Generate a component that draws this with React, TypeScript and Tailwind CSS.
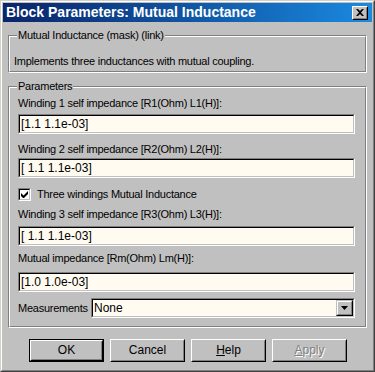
import React from 'react';

const font = { fontFamily: '"Liberation Sans", Arial, sans-serif' };

function Field({ value }: { value: string }) {
  return (
    <div className="border border-t-[#808080] border-l-[#808080] border-b-white border-r-white w-[337px]">
      <div className="flex items-center bg-[#fffbf0] border border-t-black border-l-black border-b-[#c0c0c0] border-r-[#c0c0c0] h-[18px] px-px text-[12px] text-black tracking-normal">
        {value}
      </div>
    </div>
  );
}

function Button({ children, primary, disabled }: { children: React.ReactNode; primary?: boolean; disabled?: boolean }) {
  const inner = (
    <div className="border border-t-white border-l-white border-b-black border-r-black h-full">
      <div className="flex justify-center items-center border border-t-[#c0c0c0] border-l-[#c0c0c0] border-b-[#808080] border-r-[#808080] h-full text-[12px]">
        {children}
      </div>
    </div>
  );
  if (primary) {
    return <div className="border border-black w-[75px] h-[23px]">{inner}</div>;
  }
  return <div className={`w-[75px] h-[23px] ${disabled ? 'text-[#808080]' : 'text-black'}`}>{inner}</div>;
}

function Group({ title, children, className }: { title: string; children: React.ReactNode; className?: string }) {
  return (
    <div className={`relative border border-t-[#808080] border-l-[#808080] border-b-white border-r-white ${className ?? ''}`}>
      <div className="border border-t-white border-l-white border-b-[#808080] border-r-[#808080] h-full">
        {children}
      </div>
      <span className="top-[-7px] left-[8px] absolute bg-[#c0c0c0] px-[1px] text-[11px] leading-[13px] text-black tracking-[-0.25px]">{title}</span>
    </div>
  );
}

export default function App() {
  return (
    <div style={font} className="bg-[#c0c0c0] w-[375px] h-[372px] text-black select-none">
      <div className="border border-t-[#d4d0c8] border-l-[#d4d0c8] border-b-[#404040] border-r-[#404040] w-full h-full">
        <div className="flex flex-col border border-t-white border-l-white border-b-[#808080] border-r-[#808080] p-px h-full">
          {/* title bar */}
          <div className="flex justify-between items-center bg-gradient-to-r from-[#0a246a] to-[#1a8ae0] pr-[4px] pl-[3px] h-[19px]">
            <span className="font-bold text-[14px] text-white">Block Parameters: Mutual Inductance</span>
            <div className="border border-t-white border-l-white border-b-black border-r-black bg-[#c0c0c0] w-[16px] h-[14px]">
              <div className="flex justify-center items-center border border-t-[#c0c0c0] border-l-[#c0c0c0] border-b-[#808080] border-r-[#808080] h-full">
                <svg width="8" height="7" viewBox="0 0 8 7">
                  <path d="M0 0h2l2 2 2-2h2L5 3.5 8 7H6L4 5 2 7H0l3-3.5z" fill="black" />
                </svg>
              </div>
            </div>
          </div>

          <div className="flex flex-col px-[5px] text-[11px] leading-[13px] tracking-[-0.25px]">
            <Group title="Mutual Inductance (mask) (link)" className="mt-[13px] h-[38px]">
              <div className="pt-[18px] pl-[4px]">
                Implements three inductances with mutual coupling.
              </div>
            </Group>

            <Group title="Parameters" className="mt-[13px] h-[242px]">
              <div className="flex flex-col pt-[9px] pl-[8px]">
                <div>Winding 1 self impedance [R1(Ohm) L1(H)]:</div>
                <div className="mt-[4px]"><Field value="[1.1 1.1e-03]" /></div>
                <div className="mt-[9px]">Winding 2 self impedance [R2(Ohm) L2(H)]:</div>
                <div className="mt-[2px]"><Field value="[ 1.1 1.1e-03]" /></div>
                <div className="flex items-center gap-[6px] mt-[10px]">
                  <div className="flex justify-center items-center bg-white border border-t-[#808080] border-l-[#808080] border-b-white border-r-white w-[13px] h-[13px]">
                    <div className="flex justify-center items-center border border-t-black border-l-black border-b-[#c0c0c0] border-r-[#c0c0c0] w-full h-full">
                      <svg width="7" height="7" viewBox="0 0 7 7">
                        <path d="M0 2v3l2 2h1l4-4V0L2.5 4.5z" fill="black" />
                      </svg>
                    </div>
                  </div>
                  <span>Three windings Mutual Inductance</span>
                </div>
                <div className="mt-[7px]">Winding 3 self impedance [R3(Ohm) L3(H)]:</div>
                <div className="mt-[5px]"><Field value="[ 1.1 1.1e-03]" /></div>
                <div className="mt-[6px]">Mutual impedance [Rm(Ohm) Lm(H)]:</div>
                <div className="mt-[7px]"><Field value="[1.0 1.0e-03]" /></div>
                <div className="flex justify-between items-center mt-[6px] w-[337px]">
                  <span>Measurements</span>
                  <div className="border border-t-[#808080] border-l-[#808080] border-b-white border-r-white w-[264px]">
                    <div className="flex items-center bg-[#fffbf0] border border-t-black border-l-black border-b-[#c0c0c0] border-r-[#c0c0c0] h-[18px]">
                      <span className="flex-1 px-px text-[12px] tracking-normal">None</span>
                      <div className="border border-t-[#c0c0c0] border-l-[#c0c0c0] border-b-black border-r-black bg-[#c0c0c0] w-[17px] h-[16px]">
                        <div className="flex justify-center items-center border border-t-white border-l-white border-b-[#808080] border-r-[#808080] h-full">
                          <svg width="7" height="4" viewBox="0 0 7 4">
                            <path d="M0 0h7L3.5 4z" fill="black" />
                          </svg>
                        </div>
                      </div>
                    </div>
                  </div>
                </div>
              </div>
            </Group>

            <div className="flex gap-[6px] mt-[11px] pl-[21px] tracking-normal">
              <Button primary>OK</Button>
              <Button>Cancel</Button>
              <Button><span><span className="underline">H</span>elp</span></Button>
              <Button disabled>
                <span className="[text-shadow:1px_1px_0_white]"><span className="underline">A</span>pply</span>
              </Button>
            </div>
          </div>
        </div>
      </div>
    </div>
  );
}
